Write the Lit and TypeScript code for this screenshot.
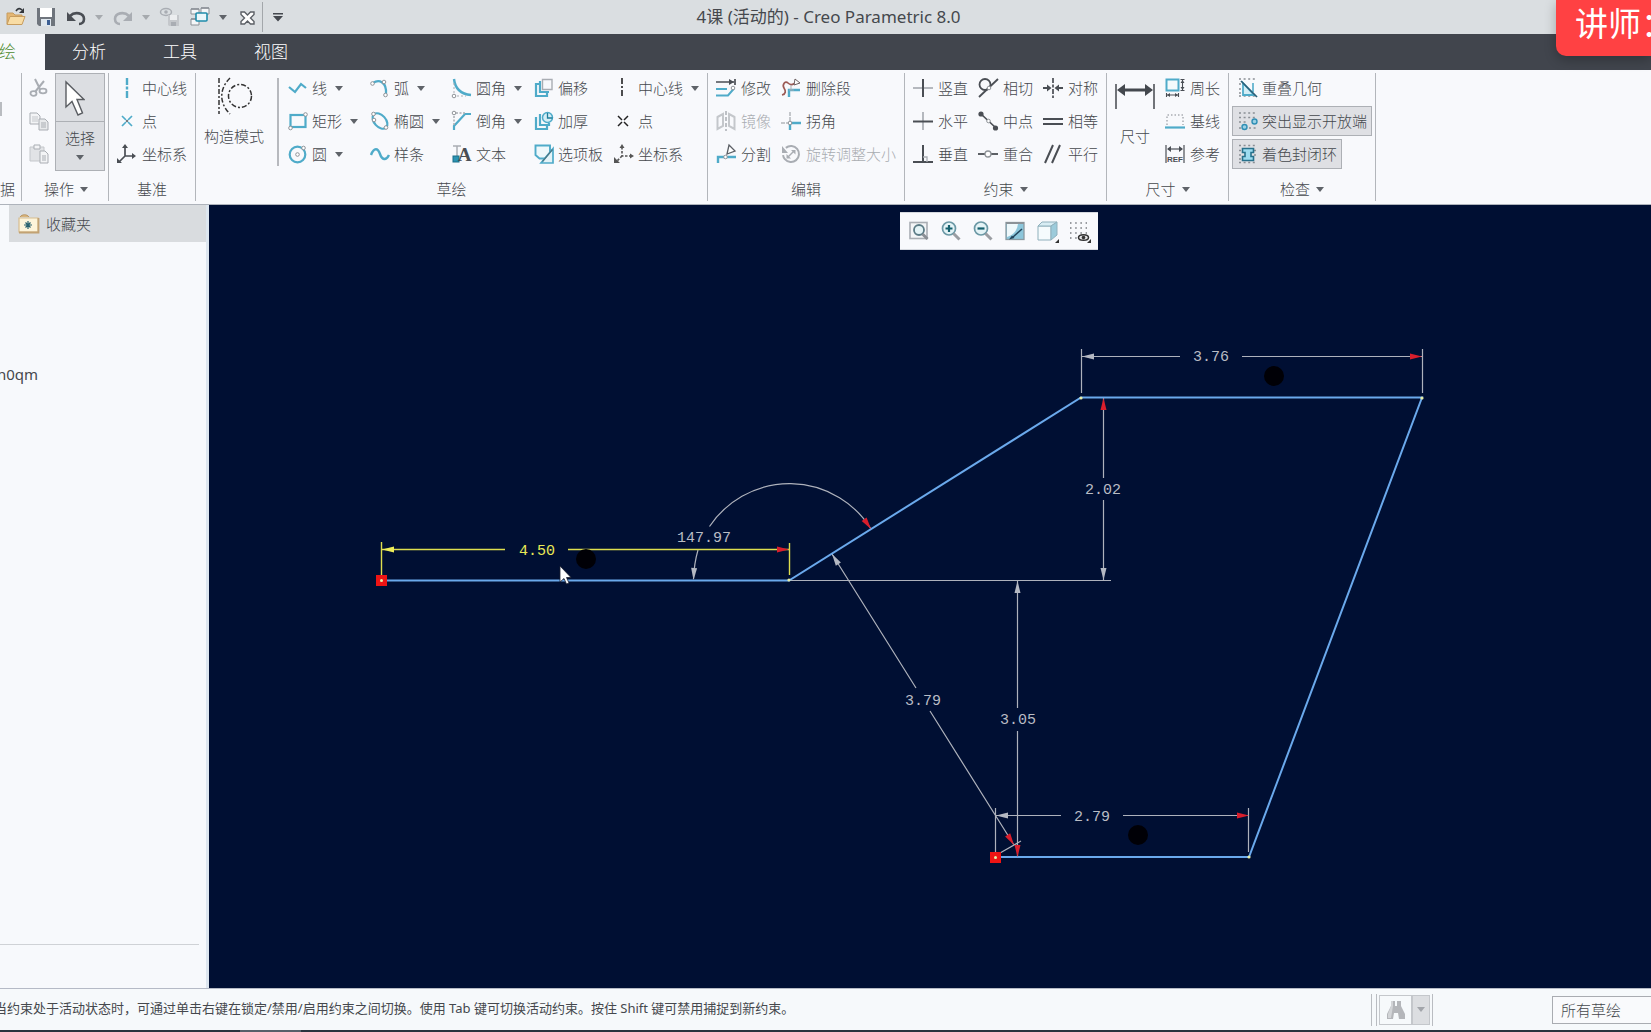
import { LitElement, html, svg, css, nothing, TemplateResult, SVGTemplateResult } from "lit";
import { customElement, property, state } from "lit/decorators.js";
import { classMap } from "lit/directives/class-map.js";

const BLUE = "#4fabc9";
const DARK = "#4a4e54";
const GREY = "#a9adb3";
const PALE = "#c4c7cb";

const node = (x: number, y: number) =>
  svg`<circle cx=${x} cy=${y} r="1.8" fill="#fff" stroke="#8f9398" stroke-width="1"/>`;

const icons: Record<string, SVGTemplateResult> = {
  open: svg`<path d="M1 17V6h6l2 2h7v3" fill="#e3b673" stroke="#c79c5e"/><path d="M1 17.500l3-8h15l-3 8z" fill="#f8dca4" stroke="#c79c5e"/><path d="M10 4c2-3 4-3 6-1" fill="none" stroke="#33373c" stroke-width="1.600"/><path d="M18 1v5h-5z" fill="#33373c"/>`,
  save: svg`<path d="M1 1h18v18H3l-2-2z" fill="#6f757d"/><path d="M4 1h12v9H4z" fill="#fff"/><path d="M5 12h10v7H5z" fill="#dfe7ee"/><path d="M11 13h3v5h-3z" fill="#3c5f94"/>`,
  undo: svg`<path d="M4 9c5-5 14-3 14 3 0 3-2 5-5 5" fill="none" stroke="${DARK}" stroke-width="2.600"/><path d="M1 5v9h9z" fill="${DARK}"/>`,
  redo: svg`<path d="M16 9C11 4 2 6 2 12c0 3 2 5 5 5" fill="none" stroke="${GREY}" stroke-width="2.600"/><path d="M19 5v9h-9z" fill="${GREY}"/>`,
  eyesave: svg`<ellipse cx="6" cy="5" rx="5.500" ry="3.500" fill="none" stroke="${GREY}" stroke-width="1.500"/><circle cx="6" cy="5" r="1.800" fill="${GREY}"/><path d="M8 8h11v11H9l-1-1z" fill="${PALE}"/><path d="M10 8h7v5h-7z" fill="#eceef0"/><path d="M11 15h5v4h-5z" fill="${GREY}"/>`,
  windows: svg`<path d="M1 2h8v5H1zM11 1h8v6h-8zM1 12h8v6H1z" fill="#f4f6f8" stroke="#8b9096"/><path d="M1 2h8M11 1h8M1 12h8" stroke="#8b9096" stroke-width="1.500"/><rect x="6" y="6" width="11" height="8" rx="1" fill="#eaf6fa" stroke="#1f8cab" stroke-width="1.600"/>`,
  close: svg`<path d="M4 5h3.500l3 3 3-3H17v2.500l-3.500 3.500 3.500 3.500V17h-3.500l-3-3-3 3H4v-2.500L7.500 11 4 7.500z" fill="#fff" stroke="#5c6066" stroke-width="1.400"/>`,
  cut: svg`<path d="M6 1l5 10M15 3L6 14" stroke="${GREY}" stroke-width="2" fill="none"/><ellipse cx="4.500" cy="15.500" rx="3" ry="2.300" fill="none" stroke="${GREY}" stroke-width="1.800"/><ellipse cx="14" cy="13" rx="3.500" ry="2.300" fill="none" stroke="${GREY}" stroke-width="1.800"/>`,
  copy: svg`<path d="M1 2h7l3 3v8H1z" fill="#f3f4f6" stroke="${GREY}"/><path d="M3 6h6M3 8h6M3 10h6" stroke="${PALE}"/><path d="M10 8h6l3 3v8h-9z" fill="#e8eaec" stroke="${GREY}"/><path d="M12 12h5M12 14h5M12 16h5" stroke="${GREY}"/>`,
  paste: svg`<path d="M1 3h14v14H1z" fill="#e1e3e6" stroke="${PALE}"/><path d="M5 1h6v4H5z" fill="#f3f4f6" stroke="${GREY}"/><path d="M11 7h5l3 3v9h-8z" fill="#f3f4f6" stroke="${GREY}"/><path d="M13 12h4M13 14h4M13 16h4" stroke="${GREY}"/>`,
  clDatum: svg`<path d="M10 0v20" stroke="${BLUE}" stroke-width="2.400" stroke-dasharray="7 1.500 3 1.500"/>`,
  ptDatum: svg`<path d="M5 5l4 4M15 5l-4 4M5 15l4-4M15 15l-4-4" stroke="${BLUE}" stroke-width="1.700"/><circle cx="10" cy="10" r="1" fill="${DARK}"/>`,
  csDatum: svg`<path d="M8 3v9h9M8 12l-6 6" fill="none" stroke="${DARK}" stroke-width="1.700"/><path d="M5 4l3-4 3 4zM15 9l4 3-4 3zM0 14v5h5z" fill="${DARK}"/>`,
  line: svg`<path d="M1 9l6 5 6-8 5 4" fill="none" stroke="${BLUE}" stroke-width="2.200"/>`,
  rect: svg`<rect x="2.500" y="4" width="15" height="12" fill="none" stroke="${BLUE}" stroke-width="2.200"/>${node(17.5, 3.5)}${node(2.5, 17)}`,
  circle: svg`<circle cx="9.500" cy="10.500" r="7.800" fill="none" stroke="${BLUE}" stroke-width="2.200"/>${node(9.5, 10.5)}${node(15.5, 4)}`,
  arc: svg`<path d="M3 5c6-4 14-1 13 11" fill="none" stroke="${BLUE}" stroke-width="2.200"/>${node(2.5, 5.5)}${node(14, 4)}${node(15.5, 17)}`,
  ellipse: svg`<ellipse cx="10" cy="10" rx="9" ry="5.800" transform="rotate(48 10 10)" fill="none" stroke="${BLUE}" stroke-width="2.200"/>${node(3.500, 3)}${node(16, 16.500)}${node(4, 9)}`,
  spline: svg`<path d="M1 11c3-8 7-7 9-1s6 7 9 1" fill="none" stroke="${BLUE}" stroke-width="2.400"/>`,
  fillet: svg`<path d="M2 1c1 9 6 15 17 16" fill="none" stroke="${BLUE}" stroke-width="2.400"/><path d="M2 5v13h12" fill="none" stroke="${GREY}" stroke-dasharray="2 2"/>${node(2, 18)}`,
  chamfer: svg`<path d="M2 19v-4L13 3h6" fill="none" stroke="${BLUE}" stroke-width="2.200"/><path d="M2 14V2h11" fill="none" stroke="${GREY}" stroke-width="1.500" stroke-dasharray="2 1.500"/>${node(2, 2)}`,
  text: svg`<path d="M1 2h8M5 2v10" stroke="${GREY}" stroke-width="1.500"/><rect x="1" y="12" width="6" height="6" fill="#2b93b3" stroke="#1a6e88"/><text x="12.500" y="17" text-anchor="middle" font-family="Liberation Serif" font-weight="700" font-size="19" fill="${DARK}">A</text>`,
  offset: svg`<path d="M6 6H2v12h11v-4" fill="none" stroke="${BLUE}" stroke-width="2.200"/><path d="M6 3v11h9" fill="none" stroke="${BLUE}" stroke-width="2.200"/><path d="M8.500 1.500h9.500v10H8.500z" fill="#f8f9fc" stroke="${GREY}" stroke-width="1.400"/>`,
  thicken: svg`<path d="M2 6v12h11v-3" fill="none" stroke="${BLUE}" stroke-width="2.200"/><path d="M6 3v11h9v-2" fill="none" stroke="${BLUE}" stroke-width="2.200"/><circle cx="13.500" cy="6.500" r="5" fill="#d5edf5" stroke="${BLUE}" stroke-width="1.500"/><path d="M13.500 2v5h5" fill="none" stroke="#1f7f9c" stroke-width="1.300"/>`,
  palette: svg`<path d="M1.500 1.500h14.500v13H5.500l-4-3.500z" fill="#eef8fb" stroke="${BLUE}" stroke-width="1.900"/><path d="M19 4.500V19H7z" fill="#e3f3f8" stroke="${BLUE}" stroke-width="1.700"/><path d="M8.500 17.500L18.500 5.500" stroke="#4b7886" stroke-width="1.200"/>`,
  cl: svg`<path d="M8 0v20" stroke="#222" stroke-width="1.600" stroke-dasharray="6 2 2 2"/>`,
  pt: svg`<path d="M4 5l4 4M14 5l-4 4M4 15l4-4M14 15l-4-4" stroke="#222" stroke-width="1.500"/>`,
  cs: svg`<path d="M8 3v9h9M8 12l-5 5" fill="none" stroke="#555" stroke-width="1.600" stroke-dasharray="2.500 1.500"/><path d="M5.500 4L8 0l2.500 4zM16 9.500l4 2.500-4 2.500zM0 13v6h6z" fill="#555"/>`,
  modify: svg`<path d="M0 4h18M19 1v6" stroke="${DARK}" stroke-width="1.700"/><path d="M13 1l5 3-5 3z" fill="${DARK}"/><path d="M0 11h11M0 17.500h12l6-7" fill="none" stroke="${BLUE}" stroke-width="2"/>${node(17, 10)}`,
  mirror: svg`<path d="M10 0v20" stroke="${GREY}" stroke-width="1.500" stroke-dasharray="4 2"/><path d="M1.500 6L7 3v12l-5.500 3zM18.500 6L13 3v12l5.500 3z" fill="none" stroke="${PALE}" stroke-width="2"/>`,
  split: svg`<path d="M2 19v-6h18" fill="none" stroke="${BLUE}" stroke-width="2.400"/><path d="M13 1l6 6-8 3z" fill="#fff" stroke="#5b5f65" stroke-width="1.300"/>${node(9.5, 13)}`,
  delseg: svg`<path d="M1 17c4-1 4-4 2-7S4 2 7 5s6 1 9-1" fill="none" stroke="#9c5a55" stroke-width="1.700"/><path d="M8 19v-7h11" fill="none" stroke="${BLUE}" stroke-width="2.400"/><path d="M14 1l5 4-6 2z" fill="#fff" stroke="#6b5f60"/><path d="M8 12h5M10 7v5" stroke="${GREY}"/>`,
  corner: svg`<path d="M9 1v9M0 12h8" stroke="${PALE}" stroke-width="2" stroke-dasharray="4 1"/><path d="M9 19v-7h11" fill="none" stroke="${BLUE}" stroke-width="2.400"/>${node(9, 12)}`,
  rotsize: svg`<circle cx="10" cy="10" r="8" fill="none" stroke="${GREY}" stroke-width="2" stroke-dasharray="42 8" transform="rotate(-130 10 10)"/><path d="M7 13l6-6" stroke="${GREY}" stroke-width="1.500"/><path d="M1 2v7h6zM10 6h4.500v4.500zM5.500 10v4.500H10z" fill="${GREY}"/>`,
  vert: svg`<path d="M0 10h20" stroke="${GREY}" stroke-width="1.700"/><path d="M10 1v18" stroke="${DARK}" stroke-width="2"/>`,
  horiz: svg`<path d="M10 1v18" stroke="${GREY}" stroke-width="1.700"/><path d="M0 10.500h20" stroke="${DARK}" stroke-width="2"/>`,
  perp: svg`<path d="M10 1v17M0 18h20" stroke="${DARK}" stroke-width="2"/><path d="M10 13h4v5" fill="none" stroke="${GREY}" stroke-width="1.300"/>`,
  tangent: svg`<circle cx="7" cy="6.500" r="5.500" fill="none" stroke="${DARK}" stroke-width="1.800"/><path d="M1 19L20 1" stroke="${DARK}" stroke-width="1.800"/>${node(11, 10)}`,
  mid: svg`<path d="M3 3l15 14" stroke="${DARK}" stroke-width="1.700"/><circle cx="3" cy="3" r="2.600" fill="${DARK}"/><circle cx="17.500" cy="17" r="2.600" fill="${DARK}"/>${node(10.5, 10)}`,
  coin: svg`<path d="M0 10h20" stroke="${DARK}" stroke-width="1.800"/><circle cx="10" cy="10" r="3" fill="#fff" stroke="#8f9398" stroke-width="1.300"/>`,
  sym: svg`<path d="M10 0v20" stroke="${DARK}" stroke-width="1.700" stroke-dasharray="5 1.500 3 1.500"/><path d="M0 10h6M14 10h6" stroke="${DARK}" stroke-width="2"/><path d="M4 6.500v7l4.500-3.500zM16 6.500v7l-4.500-3.500z" fill="${DARK}"/>`,
  equal: svg`<path d="M0 8h20M0 13h20" stroke="${DARK}" stroke-width="1.800"/>`,
  par: svg`<path d="M2 19L10 1M9 19l8-18" stroke="${DARK}" stroke-width="2"/>`,
  perim: svg`<rect x="1.500" y="1.500" width="12" height="11" fill="#f3fafc" stroke="${BLUE}" stroke-width="2"/><path d="M15.500 1.500h4M15.500 12.500h4M17.500 2v10M1.500 15v4M13.500 15v4M2 17h11" fill="none" stroke="${DARK}" stroke-width="1.100"/><path d="M15.500 5l2-3 2 3zM15.500 9l2 3 2-3zM5 15l-3 2 3 2zM10 15l3 2-3 2z" fill="${DARK}"/>`,
  baseline: svg`<path d="M2 14V4h16v10" fill="none" stroke="${GREY}" stroke-width="1.500" stroke-dasharray="1.500 2"/><path d="M0 16.500h20" stroke="${BLUE}" stroke-width="2.200"/>`,
  refdim: svg`<path d="M1 1v18M19 1v18M3 5h14" stroke="#6d7177" stroke-width="1.500"/><path d="M6 2L2 5l4 3zM14 2l4 3-4 3z" fill="${DARK}"/><text x="10" y="17.500" text-anchor="middle" font-family="Liberation Sans" font-weight="700" font-size="8" fill="${DARK}">REF</text>`,
  overlap: svg`<path d="M1 1h16M1 6h4M1 11h3M1 18h16M1 15h3" stroke="#8a8e94" stroke-width="1.700" stroke-dasharray="2 2.600"/><path d="M5 5v12h11z" fill="#d4edf5" stroke="${BLUE}" stroke-width="1.800"/><path d="M15 5v9" stroke="${BLUE}" stroke-width="1.600"/><path d="M3 3l16 16" stroke="#2a5f78" stroke-width="1.700"/>`,
  openends: svg`<path d="M1 2h16M1 6.500h16M1 11h8M1 17h4" stroke="#8a8e94" stroke-width="1.700" stroke-dasharray="2 2.600"/><circle cx="6.500" cy="16" r="2.500" fill="#9bd0e4" stroke="#2f8fb5" stroke-width="1.400"/><circle cx="16.500" cy="10.500" r="2.500" fill="#9bd0e4" stroke="#2f8fb5" stroke-width="1.400"/><path d="M9 17h9" stroke="#8a8e94" stroke-width="1.700" stroke-dasharray="2 2.600" stroke-dashoffset="-2"/>`,
  shade: svg`<path d="M1 1.500h18M1 6.500h3M16 6.500h3M1 11h3M16 11h3M1 18.500h18M1 15h3" stroke="#8a8e94" stroke-width="1.700" stroke-dasharray="2 2.600"/><path d="M4.500 4.500h11v4h-2.500v4h2.500v4h-11v-4H7v-4H4.500z" fill="#9ddcf0" stroke="#27718c" stroke-width="1.600"/>`,
  zoomfit: svg`<rect x="1" y="1.500" width="17" height="16" fill="#f4f5f7" stroke="${GREY}" stroke-width="1.600"/><circle cx="10" cy="9" r="5" fill="#e4f3f6" stroke="#5c7c86" stroke-width="1.800"/><path d="M13.500 13l5 5" stroke="#8b8f95" stroke-width="3"/>`,
  zoomin: svg`<circle cx="8" cy="7.500" r="6.500" fill="#e4f3f6" stroke="#6b98a5" stroke-width="1.700"/><path d="M8 4v7M4.500 7.500h7" stroke="#14606e" stroke-width="2.200"/><path d="M12.500 12.500l6 6" stroke="#9a9da2" stroke-width="3"/>`,
  zoomout: svg`<circle cx="8" cy="7.500" r="6.500" fill="#e4f3f6" stroke="#6b98a5" stroke-width="1.700"/><path d="M4.500 7.500h7" stroke="#14606e" stroke-width="2.200"/><path d="M12.500 12.500l6 6" stroke="#9a9da2" stroke-width="3"/>`,
  repaint: svg`<rect x="1" y="1.500" width="18" height="17" fill="#8cc6db" stroke="#8b9aa2" stroke-width="1.300"/><path d="M2 3h11c-1 6-4 11-11 13z" fill="#eef8fb"/><path d="M1 1h18v2H1z" fill="#8b9298"/><path d="M17 8L8 16" stroke="#22445c" stroke-width="1.500"/><path d="M4 18.500l3-4 2.500 2.500z" fill="#22445c"/>`,
  cube: svg`<path d="M1 5h13v14H1z" fill="#f5fbfd" stroke="#8fb0bc"/><path d="M1 5l4-4h15l-6 4z" fill="#d8edf4" stroke="#8fb0bc"/><path d="M14 5l6-4v13l-6 5z" fill="#9ccbdb" stroke="#8fb0bc"/><path d="M22 18v4h-4z" fill="#333"/>`,
  grid: svg`<path d="M1 2h17M1 7h17M1 12h17M1 17h8" stroke="#777b80" stroke-width="1.500" stroke-dasharray="1.500 3.700"/><ellipse cx="14.500" cy="16.500" rx="5" ry="2.800" fill="#e4e4e6" stroke="#333" stroke-width="1.500"/><circle cx="14.500" cy="16.500" r="1.800" fill="#333"/><path d="M22 18v4h-4z" fill="#333"/>`,
  folder: svg`<path d="M2 3c2-3 7-3 9 0" fill="#d9b57c" stroke="#b99562"/><path d="M1 4h19v14H1z" fill="#fdf4da" stroke="#d8bd90" stroke-width="1.200"/><path d="M20.500 4v14.500H1" fill="none" stroke="#c2a273" stroke-width="1.800"/><path d="M10 7v8M6 11h8M7.500 8.500l5 5M12.500 8.500l-5 5" stroke="#27606e" stroke-width="1.200"/>`,
  binoculars: svg`<path d="M5 1h4v5h2V1h4v5l4 8v5h-6l-1-6H8l-1 6H1v-5l4-8z" fill="#b4b6ba"/><path d="M5 1v5l-3 8v4h3l2-12V1z" fill="#d2d4d7"/>`,
};

const icon = (name: string) =>
  html`<svg class="ico" viewBox="0 0 20 20" aria-hidden="true">${icons[name]}</svg>`;

const caret = html`<svg class="caret" viewBox="0 0 8 5" aria-hidden="true"><path d="M0 0h8L4 5z" /></svg>`;

interface Command {
  icon: string;
  label: string;
  menu?: boolean;
  off?: boolean;
}

const c = (icon: string, label: string, extra: Partial<Command> = {}): Command => ({ icon, label, ...extra });
const menu = { menu: true };
const off = { off: true };

const datum = [c("clDatum", "中心线"), c("ptDatum", "点"), c("csDatum", "坐标系")];
const sketching = [
  c("line", "线", menu), c("arc", "弧", menu), c("fillet", "圆角", menu), c("offset", "偏移"), c("cl", "中心线", menu),
  c("rect", "矩形", menu), c("ellipse", "椭圆", menu), c("chamfer", "倒角", menu), c("thicken", "加厚"), c("pt", "点"),
  c("circle", "圆", menu), c("spline", "样条"), c("text", "文本"), c("palette", "选项板"), c("cs", "坐标系"),
];
const editing = [
  c("modify", "修改"), c("delseg", "删除段"),
  c("mirror", "镜像", off), c("corner", "拐角"),
  c("split", "分割"), c("rotsize", "旋转调整大小", off),
];
const constraints = [
  c("vert", "竖直"), c("tangent", "相切"), c("sym", "对称"),
  c("horiz", "水平"), c("mid", "中点"), c("equal", "相等"),
  c("perp", "垂直"), c("coin", "重合"), c("par", "平行"),
];
const dims = [c("perim", "周长"), c("baseline", "基线"), c("refdim", "参考")];
const inspect = ["重叠几何", "突出显示开放端", "着色封闭环"];
const inspectIcons = ["overlap", "openends", "shade"];

@customElement("sketch-view")
export class SketchView extends LitElement {
  static styles = css`
    :host { display: block; height: 100%; }
    svg { display: block; width: 100%; height: 100%; }
    .geo { stroke: #6aa9ec; stroke-width: 2; fill: none; }
    .dim { stroke: #aeb2bc; stroke-width: 1.2; fill: none; }
    .sel { stroke: #dede4e; stroke-width: 1.4; fill: none; }
    text { font-family: "Liberation Mono", monospace; font-size: 15px; fill: #b9bcc4; text-anchor: middle; }
    .seltext { fill: #e9e956; }
    .tip { fill: #b4b8c2; }
    .seltip { fill: #eded5a; }
    .red { fill: #d81e2c; }
    .end { fill: #ee1414; }
    .pt { fill: #e8efa8; }
    .mark { fill: #000006; }
  `;

  private tip(x: number, y: number, angle: number, cls: string) {
    return svg`<path class=${cls} transform="translate(${x} ${y}) rotate(${angle})" d="M0 0L-12 -3V3z"/>`;
  }

  render() {
    const points = [[789, 580], [1081, 398], [1422, 398], [1249, 857]];
    const ends = [[381, 580], [995, 857]];
    const marks = [[586, 559], [1274, 376], [1138, 835]];
    return html`<svg viewBox="209 205 1442 783" preserveAspectRatio="xMinYMin meet" role="img" aria-label="草绘">
      <path class="dim" d="M789 580.500H1111M1081.500 349V393M1422.500 349V393M1082 356.500H1180M1242 356.500H1422M1103.500 398V478M1103.500 500V580M1017.500 581V708M1017.500 731V856M995.500 808V852M1248.500 808V852M996 815.500H1061M1123 815.500H1249M1000 853L1021 841M832 554L916 688M930 711L1014 845"/>
      <path class="dim" d="M709.500 526.500A96 96 0 0 1 871 529M698 550Q694 564 693.500 579"/>
      <path class="sel" d="M381.500 542V577M789.500 543V575M382 549.500H505M568 549.500H789"/>
      ${marks.map(([x, y]) => svg`<circle class="mark" cx=${x} cy=${y} r="10"/>`)}
      <path class="geo" d="M381 580.500H789L1081 397.500H1422L1249 857H996"/>
      ${this.tip(1082, 356.5, 180, "tip")}${this.tip(1422, 356.5, 0, "red")}
      ${this.tip(382, 549.5, 180, "seltip")}${this.tip(789, 549.5, 0, "red")}
      ${this.tip(1103.5, 398, -90, "red")}${this.tip(1103.5, 580, 90, "tip")}
      ${this.tip(1017.5, 581, -90, "tip")}${this.tip(1017.5, 857, 90, "red")}
      ${this.tip(996, 815.5, 180, "tip")}${this.tip(1249, 815.5, 0, "red")}
      ${this.tip(832, 554, -122, "tip")}${this.tip(1014, 845, 58, "red")}
      ${this.tip(693.5, 580, 93, "tip")}${this.tip(871, 529, 55, "red")}
      ${ends.map(([x, y]) => svg`<rect class="end" x=${x - 5} y=${y - 5} width="11" height="11"/><circle class="pt" cx=${x + 0.5} cy=${y + 0.5} r="1.5"/>`)}
      ${points.map(([x, y]) => svg`<circle class="pt" cx=${x} cy=${y} r="1.6"/>`)}
      <text x="1211" y="361">3.76</text>
      <text x="1103" y="494">2.02</text>
      <text x="704" y="542">147.97</text>
      <text class="seltext" x="537" y="555">4.50</text>
      <text x="923" y="705">3.79</text>
      <text x="1018" y="724">3.05</text>
      <text x="1092" y="821">2.79</text>
      <path transform="translate(560 566)" d="M0 0V16L4 12.500L6.500 18L9 17L6.500 11.500H11z" fill="#fff" stroke="#1a1f30" stroke-width="0.800"/>
    </svg>`;
  }
}

@customElement("app-root")
export class AppRoot extends LitElement {
  @property() docTitle = "4课 (活动的) - Creo Parametric 8.0";
  @state() private pressed = [false, true, true];

  static styles = css`
    :host {
      display: grid;
      grid-template-rows: auto auto auto 1fr auto auto;
      grid-template-columns: minmax(0, 1fr);
      min-height: 100vh;
      position: relative;
      overflow: hidden;
      background: #f8f9fc;
      color: #45484d;
      font: 15px/20px "Noto Sans", "Noto Sans CJK SC", sans-serif;
      font-weight: 300;
    }
    * { box-sizing: border-box; }
    button, select { font: inherit; color: inherit; background: none; border: 0; padding: 0; margin: 0; border-radius: 0; }
    .ico { width: 20px; height: 20px; flex: none; display: block; overflow: visible; fill: none; }
    .caret { width: 8px; height: 5px; flex: none; display: block; fill: #5f6369; }

    .titlebar { display: grid; grid-template-columns: 1fr auto 1fr; align-items: center; height: 34px; padding-left: 6px; background: #dadee1; }
    .quick { display: flex; align-items: center; gap: 10px; }
    .split { display: flex; align-items: center; gap: 9px; }
    .faint .caret { fill: #a6aaae; }
    .bar { width: 1px; height: 30px; background: #a3a7ab; margin: 0 0 0 -5px; }
    .more { width: 10px; height: 10px; display: block; }
    .title { font-size: 17px; font-weight: 400; margin: 0; color: #45484d; white-space: nowrap; }

    .tabs { display: flex; height: 36px; background: #41454d; font-size: 17px; color: #fff; }
    .tab { padding: 0 30px 0 27px; height: 36px; }
    .current { background: #f8f9fc; color: #4c8a2f; padding: 0 29px 0 0; width: 45px; display: flex; align-items: center; justify-content: flex-end; overflow: hidden; }

    .ribbon { display: flex; padding: 3px 0; border-bottom: 1px solid #aeb3bb; }
    .group { display: flex; flex-direction: column; padding: 0 8px; border-right: 1px solid #b3b6bb; }
    .body { display: flex; height: 98px; }
    .name { display: flex; justify-content: center; align-items: center; gap: 6px; height: 20px; margin: 8px 0 2px; font: inherit; font-weight: 300; }
    .cut { width: 22px; padding: 0 6px 0 0; }
    .cut .name { justify-content: flex-end; }
    .sliver { width: 2px; height: 14px; background: #b9bcc0; margin-top: 29px; }
    .ops { padding: 0 3px 0 7px; }
    .ops .body { gap: 6px; }
    .ops .name { margin-right: 2px; }
    .grid { display: grid; grid-auto-rows: 30px; row-gap: 3px; align-content: start; justify-items: start; }
    .g5 { grid-template-columns: 82px 82px 82px 80px auto; padding-left: 9px; }
    .g2 { grid-template-columns: 65px auto; }
    .g3 { grid-template-columns: 65px 65px auto; }
    .cmd { display: flex; align-items: center; gap: 5px; height: 30px; white-space: nowrap; }
    .cmd .caret { margin-left: 3px; }
    .g5 .cmd, .inspect .cmd { gap: 4px; }
    .g5 .cmd span, .inspect .cmd span { padding-right: 1px; }
    .cmd:disabled { color: #a9acb1; }
    .select { display: flex; flex-direction: column; align-items: center; width: 50px; height: 98px; background: #dcdee2; border: 1px solid #adb0b5; }
    .pointer { width: 100%; height: 48px; border-bottom: 1px solid #adb0b5; display: flex; justify-content: center; padding: 6px 10px 0 0; }
    .pointer svg { width: 20px; height: 36px; }
    .select span { margin: 6px 0 7px; }
    .big { display: flex; flex-direction: column; align-items: center; height: 98px; white-space: nowrap; }
    .big svg { display: block; width: 40px; height: 40px; margin: 3px 0 10px; }
    .rule { width: 2px; height: 88px; background: #b7b9be; margin: 5px 0 0 13px; }
    .size .body { gap: 10px; }
    .inspect { padding: 0 3px; }
    .toggle { padding: 0 4px 0 6px; }
    .toggle[aria-pressed="true"] { background: #dfe0e4; box-shadow: inset 0 0 0 1px #adb0b5; }

    .main { display: grid; grid-template-columns: 209px minmax(0, 1fr); min-height: 0; }
    .side { border-right: 3px solid #dde6ef; background: #f7f9fc; display: flex; flex-direction: column; min-height: 0; }
    .fav { display: flex; align-items: center; gap: 8px; height: 37px; margin-left: 9px; padding-left: 9px; background: #d9dcdf; text-align: left; }
    .list { flex: 1; border-bottom: 1px solid #cfd2d6; margin-right: 7px; padding-top: 122px; }
    .entry { margin: 0 0 0 -3px; font-weight: 400; }
    .foot { height: 43px; }
    .canvas { position: relative; background: #000f33; min-height: 0; }
    .view { position: absolute; inset: 0; }
    .float { position: absolute; left: 691px; top: 7px; display: flex; gap: 12px; padding: 8px 9px; height: 38px; background: #f8f9fc; border: 1px solid #d5d8de; border-width: 1px 0; }

    .status { display: flex; align-items: center; height: 42px; border-top: 1px solid #b5bac6; background: #f6f9fb; }
    .hint { margin: 0 auto 4px -6px; font-size: 13px; font-weight: 400; white-space: nowrap; }
    .finder { display: flex; align-items: center; height: 32px; border: 1px solid #b9bcc1; border-width: 0 1px; padding: 0 2px; margin-right: 119px; }
    .finder::before { content: ""; width: 1px; height: 32px; background: #b9bcc1; margin: 0 2px; }
    .search { width: 33px; height: 30px; border: 1px solid #c4c7cb; display: grid; place-items: center; }
    .drop { width: 18px; height: 30px; background: #dcdee1; border: 1px solid #c4c7cb; display: grid; place-items: center; }
    .drop .caret { fill: #a2a5aa; }
    .filter { appearance: none; width: 99px; height: 28px; border: 1px solid #a9acb1; border-right: 0; padding-left: 8px; background: #f9fafc; }
    .edge { display: flex; height: 2px; background: #2a333e; padding-left: 240px; }
    .edge span { width: 61px; background: #56606a; }

    .badge { position: absolute; top: 0; right: 0; width: 95px; height: 56px; padding-left: 19px; overflow: hidden; background: #ff4143; color: #fff; border-bottom-left-radius: 10px; box-shadow: 0 4px 12px rgba(0, 0, 0, 0.25); font-size: 33px; font-weight: 400; line-height: 48px; white-space: nowrap; }
  `;

  private cmd(item: Command): TemplateResult {
    return html`<button class="cmd" ?disabled=${item.off}>
      ${icon(item.icon)}<span>${item.label}</span>${item.menu ? caret : nothing}
    </button>`;
  }

  private tool(name: string, label: string) {
    return html`<button aria-label=${label}>${icon(name)}</button>`;
  }

  private split(name: string, label: string, faint: boolean) {
    return html`<div class=${classMap({ split: true, faint })}>
      ${this.tool(name, label)}<button aria-label="${label}选项">${caret}</button>
    </div>`;
  }

  private toggle(i: number) {
    this.pressed = this.pressed.map((v, n) => (n === i ? !v : v));
  }

  render() {
    return html`
      <header class="titlebar">
        <div class="quick">
          ${this.tool("open", "打开")}${this.tool("save", "保存")}
          ${this.split("undo", "撤消", true)}${this.split("redo", "重做", true)}
          ${this.tool("eyesave", "保存视图")}${this.split("windows", "窗口", false)}
          ${this.tool("close", "关闭")}
          <span class="bar"></span>
          <button aria-label="自定义">
            <svg class="more" viewBox="0 0 10 10" aria-hidden="true"><path d="M0 1h10v1.500H0zM0 4h10L5 9.500z" fill="#44484e" /></svg>
          </button>
        </div>
        <h1 class="title">${this.docTitle}</h1>
      </header>
      <nav class="tabs">
        <button class="tab current">绘</button>
        <button class="tab">分析</button>
        <button class="tab">工具</button>
        <button class="tab">视图</button>
      </nav>
      <section class="ribbon">
        <div class="group cut"><div class="body"><span class="sliver"></span></div><div class="name">据</div></div>
        <div class="group ops">
          <div class="body">
            <div class="grid">
              ${[["cut", "剪切"], ["copy", "复制"], ["paste", "粘贴"]].map(([n, l]) => html`<button class="cmd" aria-label=${l} disabled>${icon(n)}</button>`)}
            </div>
            <button class="select">
              <div class="pointer"><svg viewBox="0 0 20 36" aria-hidden="true"><path d="M1 2V27L7 21.500L13 35L17.500 33L12 19.500H19z" fill="#fff" stroke="#5a5d62" stroke-width="1.400" /></svg></div>
              <span>选择</span>${caret}
            </button>
          </div>
          <button class="name">操作${caret}</button>
        </div>
        <div class="group">
          <div class="body"><div class="grid">${datum.map((d) => this.cmd(d))}</div></div>
          <div class="name">基准</div>
        </div>
        <div class="group">
          <div class="body">
            <button class="big">
              <svg viewBox="0 0 40 40" aria-hidden="true"><g fill="none" stroke="#333" stroke-width="1.500" stroke-dasharray="5 2 2 2"><path d="M5 2V38M16 2C5 13 5 27 16 38" /><circle cx="26" cy="20" r="11.500" /></g></svg>
              <span>构造模式</span>
            </button>
            <span class="rule"></span>
            <div class="grid g5">${sketching.map((d) => this.cmd(d))}</div>
          </div>
          <div class="name">草绘</div>
        </div>
        <div class="group">
          <div class="body"><div class="grid g2">${editing.map((d) => this.cmd(d))}</div></div>
          <div class="name">编辑</div>
        </div>
        <div class="group">
          <div class="body"><div class="grid g3">${constraints.map((d) => this.cmd(d))}</div></div>
          <button class="name">约束${caret}</button>
        </div>
        <div class="group size">
          <div class="body">
            <button class="big">
              <svg viewBox="0 0 40 40" aria-hidden="true"><path d="M1 8V33M39 8V33" stroke="#44484e" stroke-width="1.500" /><path d="M6 14H34" stroke="#44484e" stroke-width="3" /><path d="M10 8L2 14L10 20zM30 8L38 14L30 20z" fill="#44484e" /></svg>
              <span>尺寸</span>
            </button>
            <div class="grid">${dims.map((d) => this.cmd(d))}</div>
          </div>
          <button class="name">尺寸${caret}</button>
        </div>
        <div class="group inspect">
          <div class="body">
            <div class="grid">
              ${inspect.map((label, i) => html`<button class="cmd toggle" aria-pressed=${String(this.pressed[i])} @click=${() => this.toggle(i)}>${icon(inspectIcons[i])}<span>${label}</span></button>`)}
            </div>
          </div>
          <button class="name">检查${caret}</button>
        </div>
      </section>
      <main class="main">
        <aside class="side">
          <button class="fav">${icon("folder")}<span>收藏夹</span></button>
          <div class="list"><p class="entry">n0qm</p></div>
          <div class="foot"></div>
        </aside>
        <section class="canvas">
          <div class="view"><sketch-view></sketch-view></div>
          <div class="float">
            ${this.tool("zoomfit", "重新调整")}${this.tool("zoomin", "放大")}${this.tool("zoomout", "缩小")}
            ${this.tool("repaint", "重画")}${this.tool("cube", "显示样式")}${this.tool("grid", "草绘器显示过滤器")}
          </div>
        </section>
      </main>
      <footer class="status">
        <p class="hint">当约束处于活动状态时，可通过单击右键在锁定/禁用/启用约束之间切换。使用 Tab 键可切换活动约束。按住 Shift 键可禁用捕捉到新约束。</p>
        <div class="finder">
          <button class="search" aria-label="查找">${icon("binoculars")}</button>
          <button class="drop" aria-label="查找选项">${caret}</button>
        </div>
        <select class="filter" aria-label="过滤器"><option>所有草绘</option></select>
      </footer>
      <div class="edge"><span></span></div>
      <div class="badge">讲师：</div>
    `;
  }
}
